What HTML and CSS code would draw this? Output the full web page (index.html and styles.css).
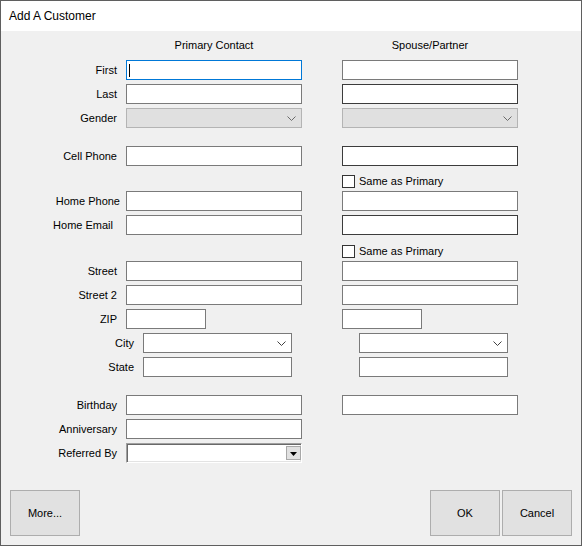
FILE: index.html
```html
<!DOCTYPE html>
<html lang="en">

<head>
    <meta charset="UTF-8">
    <meta name="viewport" content="width=device-width, initial-scale=1.0">
    <title>Add A Customer</title>
    <link rel="stylesheet" href="styles.css">
</head>

<body>
    <div class="dialog">
        <div class="titleBar">Add A Customer</div>

        <div class="form">
            <div class="row head">
                <span class="lbl"></span>
                <span class="cell">Primary Contact</span>
                <span class="cell">Spouse/Partner</span>
            </div>

            <div class="row">
                <label class="lbl">First</label>
                <span class="cell"><span class="field focus"><span class="caret"></span></span></span>
                <span class="cell"><span class="field"></span></span>
            </div>
            <div class="row">
                <label class="lbl">Last</label>
                <span class="cell"><span class="field"></span></span>
                <span class="cell"><span class="field dark"></span></span>
            </div>
            <div class="row">
                <label class="lbl">Gender</label>
                <span class="cell"><span class="field combo disabled">
                    <svg width="9" height="5" viewBox="0 0 9 5"><polyline points="0.5,0.5 4.5,4.5 8.5,0.5" /></svg>
                </span></span>
                <span class="cell"><span class="field combo disabled">
                    <svg width="9" height="5" viewBox="0 0 9 5"><polyline points="0.5,0.5 4.5,4.5 8.5,0.5" /></svg>
                </span></span>
            </div>

            <div class="row gap">
                <label class="lbl">Cell Phone</label>
                <span class="cell"><span class="field"></span></span>
                <span class="cell"><span class="field dark"></span></span>
            </div>
            <div class="row check">
                <span class="lbl"></span>
                <span class="cell"></span>
                <label class="cell opt"><span class="box"></span>Same as Primary</label>
            </div>
            <div class="row">
                <label class="lbl wideLbl">Home Phone</label>
                <span class="cell"><span class="field"></span></span>
                <span class="cell"><span class="field"></span></span>
            </div>
            <div class="row">
                <label class="lbl narrowLbl">Home Email</label>
                <span class="cell"><span class="field"></span></span>
                <span class="cell"><span class="field dark"></span></span>
            </div>
            <div class="row check lower">
                <span class="lbl"></span>
                <span class="cell"></span>
                <label class="cell opt"><span class="box"></span>Same as Primary</label>
            </div>

            <div class="row">
                <label class="lbl">Street</label>
                <span class="cell"><span class="field"></span></span>
                <span class="cell"><span class="field"></span></span>
            </div>
            <div class="row">
                <label class="lbl">Street 2</label>
                <span class="cell"><span class="field"></span></span>
                <span class="cell"><span class="field"></span></span>
            </div>
            <div class="row">
                <label class="lbl">ZIP</label>
                <span class="cell"><span class="field short"></span></span>
                <span class="cell"><span class="field short"></span></span>
            </div>
            <div class="row indent">
                <label class="lbl">City</label>
                <span class="cell"><span class="field combo">
                    <svg width="9" height="5" viewBox="0 0 9 5"><polyline points="0.5,0.5 4.5,4.5 8.5,0.5" /></svg>
                </span></span>
                <span class="cell"><span class="field combo">
                    <svg width="9" height="5" viewBox="0 0 9 5"><polyline points="0.5,0.5 4.5,4.5 8.5,0.5" /></svg>
                </span></span>
            </div>
            <div class="row indent">
                <label class="lbl">State</label>
                <span class="cell"><span class="field"></span></span>
                <span class="cell"><span class="field"></span></span>
            </div>

            <div class="row gap">
                <label class="lbl">Birthday</label>
                <span class="cell"><span class="field"></span></span>
                <span class="cell"><span class="field"></span></span>
            </div>
            <div class="row">
                <label class="lbl">Anniversary</label>
                <span class="cell"><span class="field"></span></span>
            </div>
            <div class="row">
                <label class="lbl">Referred By</label>
                <span class="cell"><span class="field classic">
                    <span class="dropBtn">
                        <svg width="7" height="4" viewBox="0 0 7 4"><polygon points="0,0 7,0 3.5,4" /></svg>
                    </span>
                </span></span>
            </div>
        </div>

        <div class="btnBar">
            <button class="dlgBtn">More...</button>
            <span class="spacer"></span>
            <button class="dlgBtn">OK</button>
            <button class="dlgBtn">Cancel</button>
        </div>
    </div>
</body>

</html>
```

FILE: styles.css
```css
* {
    margin: 0;
    padding: 0;
    box-sizing: border-box;
}

body {
    width: 582px;
    height: 546px;
    font-family: "Liberation Sans", Arial, sans-serif;
    font-size: 11px;
    color: #000;
    background-color: #f0f0f0;
}

.dialog {
    width: 582px;
    height: 546px;
    border: 1px solid #5f5f5f;
    background-color: #f0f0f0;
    display: flex;
    flex-direction: column;
}

.titleBar {
    height: 30px;
    line-height: 30px;
    padding-left: 8px;
    font-size: 12px;
    background-color: #fff;
}

.form {
    display: flex;
    flex-direction: column;
    padding-top: 7px;
}

.row {
    display: flex;
    align-items: center;
    height: 20px;
    margin-top: 4px;
}

.row.head {
    height: 14px;
    line-height: 14px;
    margin-top: 0;
    margin-bottom: 4px;
}

.row.head .cell {
    text-align: center;
}

.row.gap {
    margin-top: 18px;
}

.lbl {
    flex: none;
    width: 125px;
    padding-right: 9px;
    text-align: right;
    white-space: nowrap;
}

.lbl.wideLbl {
    padding-right: 6px;
}

.lbl.narrowLbl {
    padding-right: 13px;
}

.cell {
    flex: none;
    width: 176px;
    height: 100%;
}

.cell + .cell {
    margin-left: 40px;
}

.row.indent .lbl {
    width: 142px;
    padding-right: 9px;
}

.row.indent .cell {
    width: 149px;
}

.row.indent .cell + .cell {
    margin-left: 67px;
}

.field {
    display: block;
    width: 100%;
    height: 100%;
    border: 1px solid #7a7a7a;
    background-color: #fff;
}

.field.dark {
    border-color: #3c3c3c;
}

.field.focus {
    border-color: #0078d7;
    display: flex;
    align-items: center;
}

.caret {
    width: 1px;
    height: 13px;
    margin-left: 2px;
    background-color: #000;
}

.field.short {
    width: 80px;
}

.combo {
    display: flex;
    align-items: center;
    justify-content: flex-end;
    padding-right: 5px;
}

.combo svg {
    fill: none;
    stroke: #404040;
    stroke-width: 1;
}

.combo.disabled {
    background-color: #e0e0e0;
    border-color: #b4b4b4;
}

.combo.disabled svg {
    stroke: #6a6a6a;
}

.classic {
    display: flex;
    align-items: center;
    justify-content: flex-end;
    border-color: #a0a0a0 #fff #fff #a0a0a0;
    box-shadow: inset 1px 1px 0 #696969, inset -1px -1px 0 #e3e3e3;
}

.dropBtn {
    width: 15px;
    height: 14px;
    display: flex;
    align-items: center;
    justify-content: center;
    background-color: #e1e1e1;
    border: 1px solid #a8a8a8;
}

.dropBtn svg {
    fill: #000;
    margin-top: 1px;
}

.row.check {
    height: 18px;
    margin-bottom: -1px;
    align-items: flex-end;
}

.row.check.lower {
    margin-top: 5px;
}

.row.check .cell {
    height: auto;
}

.opt {
    display: flex;
    align-items: flex-start;
    line-height: 12px;
}

.box {
    width: 13px;
    height: 13px;
    margin-right: 4px;
    border: 1px solid #333;
    background-color: #fff;
}

.btnBar {
    margin-top: auto;
    display: flex;
    gap: 2px;
    padding: 0 9px 9px 9px;
}

.spacer {
    flex: 1;
}

.dlgBtn {
    width: 70px;
    height: 46px;
    font-family: inherit;
    font-size: 11px;
    color: #000;
    background-color: #e1e1e1;
    border: 1px solid #adadad;
}
```
